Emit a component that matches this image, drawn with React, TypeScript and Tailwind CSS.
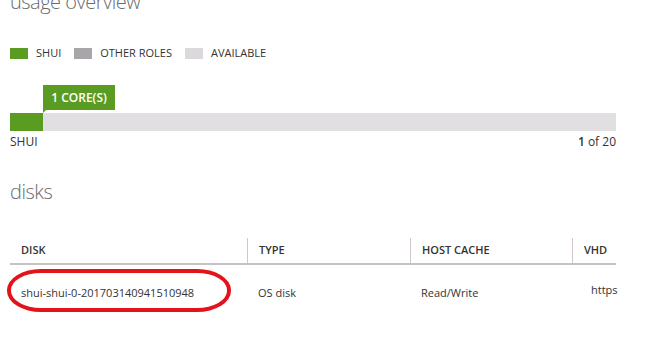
import React from "react";

const cols = "grid grid-cols-[237px_163px_162px_44px]";

function LegendItem({ color, label }: { color: string; label: string }) {
  return (
    <div className="flex items-center gap-[8px]">
      <span className={`w-[18px] h-[11px] ${color}`} />
      <span className="text-[11px] text-[#333]">{label}</span>
    </div>
  );
}

export default function App() {
  return (
    <div className="relative w-[646px] h-[340px] overflow-hidden bg-white pl-[10px] font-['Open_Sans',sans-serif]">
      <h1 className="text-[20px] leading-none font-light tracking-[-0.5px] text-[#6b6b6b] mt-[-8px]">usage overview</h1>

      <div className="flex items-center gap-[13px] mt-[36px] h-[11px]">
        <LegendItem color="bg-[#5a9b22]" label="SHUI" />
        <LegendItem color="bg-[#a9a6a9]" label="OTHER ROLES" />
        <LegendItem color="bg-[#dcd9dc]" label="AVAILABLE" />
      </div>

      {/* usage bar */}
      <div className="w-[606px] mt-[26px]">
        <div className="ml-[33px] relative w-[72px] h-[25px] bg-[#5a9b22] flex items-center justify-center text-white text-[12px] font-semibold">
          1 CORE(S)
          <span className="absolute left-0 top-[25px] w-0 h-0 border-t-[3px] border-t-[#5a9b22] border-r-[3px] border-r-transparent" />
        </div>
        <div className="flex h-[18px] mt-[3px] bg-[#e2dfe2]">
          <div className="w-[33px] bg-[#5a9b22]" />
        </div>
        <div className="flex justify-between text-[12px] leading-[18px] text-[#333] mt-[2px]">
          <span>SHUI</span>
          <span>
            <b className="font-semibold">1</b> of 20
          </span>
        </div>
      </div>

      <h2 className="text-[20px] font-light tracking-[-0.5px] text-[#6b6b6b] mt-[31px] leading-none">disks</h2>

      {/* table */}
      <div className="w-[606px] mt-[36px]">
        <div className={`${cols} h-[27px] border-b-2 border-[#c4c2c4] text-[11px] font-semibold text-[#333]`}>
          <div className="pl-[11px] flex items-center">DISK</div>
          <div className="pl-[11px] flex items-center border-l border-[#cfc6cf]">TYPE</div>
          <div className="pl-[11px] flex items-center border-l border-[#cfc6cf]">HOST CACHE</div>
          <div className="pl-[11px] flex items-center border-l border-[#cfc6cf]">VHD</div>
        </div>
        <div className={`${cols} h-[56px] text-[11px] text-[#333]`}>
          <div className="pl-[11px] flex items-center">shui-shui-0-201703140941510948</div>
          <div className="pl-[11px] flex items-center">OS disk</div>
          <div className="pl-[11px] flex items-center">Read/Write</div>
          <div className="pl-[19px] flex items-center pb-[6px]">https</div>
        </div>
      </div>

      {/* red annotation */}
      <div className="absolute left-[7px] top-[269px] w-[224px] h-[43px] border-4 border-[#e3121b] rounded-[34px/21px]" />
    </div>
  );
}
